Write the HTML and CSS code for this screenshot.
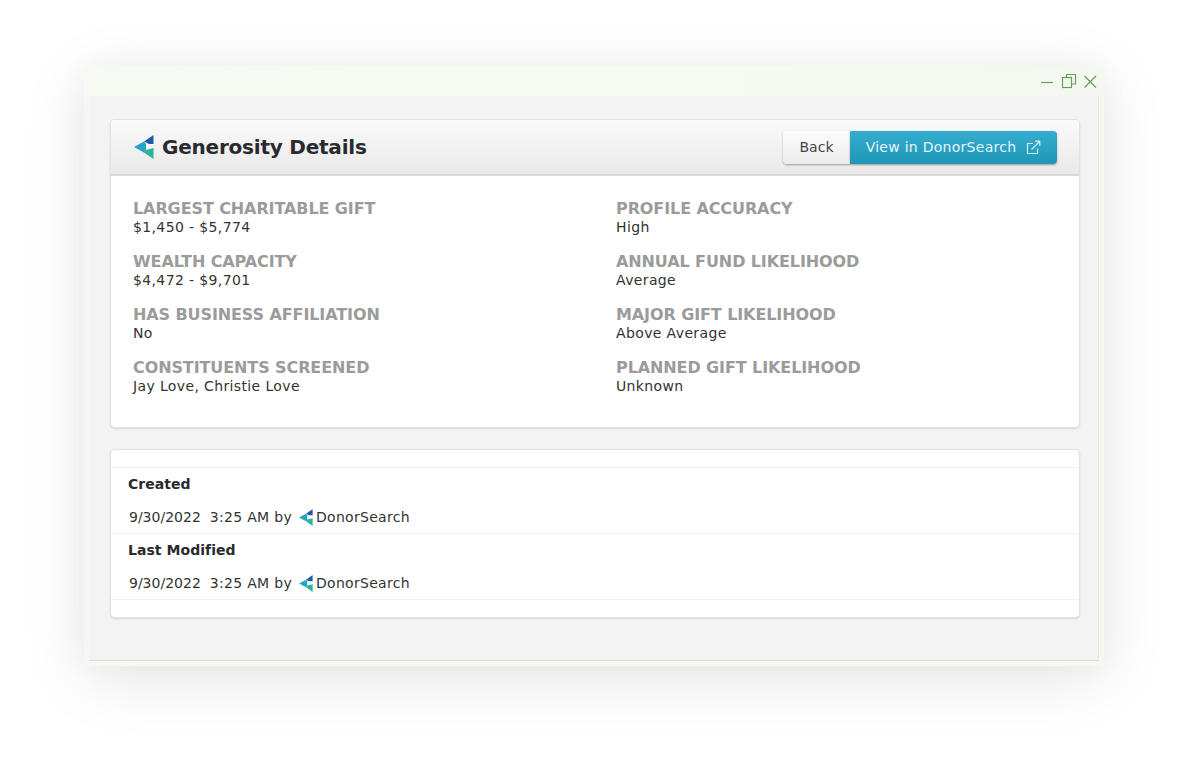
FILE: index.html
```html
<!DOCTYPE html>
<html lang="en">
<head>
<meta charset="utf-8">
<title>Generosity Details</title>
<link rel="stylesheet" href="styles.css">
</head>
<body>
<svg class="defs" width="0" height="0" aria-hidden="true">
  <symbol id="ds-logo" viewBox="0 0 20 24">
    <polygon points="19.5,0 19.5,9 15,9 10,6.5" fill="#1f5ca6"/>
    <polygon points="0,12 10,6.5 12,9 12,15 10,17.5" fill="#27a3c6"/>
    <polygon points="12,9 15,9 19.5,9 19.5,10 14,12 12,15" fill="#ffffff"/>
    <polygon points="10,17.5 12,15 19.5,13 19.5,24" fill="#27b49a"/>
  </symbol>
</svg>
<div class="window">
  <div class="titlebar">
    <svg class="winctl" width="60" height="16" viewBox="0 0 60 16" fill="none" stroke="#659e5b" stroke-width="1.2">
      <path d="M1 9.5H13"/>
      <rect x="22.5" y="4.5" width="9" height="10"/>
      <path d="M26.5 4.5V1.5H35.5V11H31.5"/>
      <path d="M44.5 3L56 14.5M56 3L44.5 14.5"/>
    </svg>
  </div>
  <div class="content">
    <section class="panel details">
      <header class="panel-head">
        <h1 class="title"><svg class="logo-lg"><use href="#ds-logo"/></svg>Generosity Details</h1>
        <div class="actions">
          <button class="btn btn-back">Back</button>
          <button class="btn btn-view">View in DonorSearch
            <svg class="ext" width="15" height="15" viewBox="0 0 15 15" fill="none" stroke="#d5eef5" stroke-width="1.2">
              <path d="M11.5 8.5V13.5H1.5V3.5H7"/>
              <path d="M5.5 9.5L13.5 1.5M9 1.2H13.8V6"/>
            </svg>
          </button>
        </div>
      </header>
      <div class="fields">
        <div class="field"><div class="label">LARGEST CHARITABLE GIFT</div><div class="value">$1,450 - $5,774</div></div>
        <div class="field"><div class="label">PROFILE ACCURACY</div><div class="value">High</div></div>
        <div class="field"><div class="label">WEALTH CAPACITY</div><div class="value">$4,472 - $9,701</div></div>
        <div class="field"><div class="label">ANNUAL FUND LIKELIHOOD</div><div class="value">Average</div></div>
        <div class="field"><div class="label">HAS BUSINESS AFFILIATION</div><div class="value">No</div></div>
        <div class="field"><div class="label">MAJOR GIFT LIKELIHOOD</div><div class="value">Above Average</div></div>
        <div class="field"><div class="label">CONSTITUENTS SCREENED</div><div class="value">Jay Love, Christie Love</div></div>
        <div class="field"><div class="label">PLANNED GIFT LIKELIHOOD</div><div class="value">Unknown</div></div>
      </div>
    </section>
    <section class="panel audit">
      <div class="audit-row">
        <div class="audit-label">Created</div>
        <div class="audit-value"><span class="date">9/30/2022</span><span>3:25 AM by</span><svg class="logo-sm"><use href="#ds-logo"/></svg><span>DonorSearch</span></div>
      </div>
      <div class="audit-row">
        <div class="audit-label">Last Modified</div>
        <div class="audit-value"><span class="date">9/30/2022</span><span>3:25 AM by</span><svg class="logo-sm"><use href="#ds-logo"/></svg><span>DonorSearch</span></div>
      </div>
    </section>
  </div>
</div>
</body>
</html>
```
FILE: styles.css
```css
* { box-sizing: border-box; }
html, body { margin: 0; height: 100%; }
body {
  background: #fff;
  padding: 66px 84px 0;
  font-family: "DejaVu Sans", Verdana, sans-serif;
  color: #333;
  overflow: hidden;
}
.defs { position: absolute; }
.window {
  width: 1020px;
  height: 600px;
  background: #f5f7f1;
  padding: 0 5px 5px;
  box-shadow: 0 12px 60px rgba(0,0,0,.10), 0 0 30px rgba(0,0,0,.03);
  display: flex;
  flex-direction: column;
}
.titlebar {
  height: 30px;
  margin: 0 -5px;
  padding: 7px 4px 0 0;
  display: flex;
  justify-content: flex-end;
  align-items: flex-start;
  background: linear-gradient(90deg, #f7f9f3, #f6fbf1 30%, #f5fbef 60%, #f4f7ef);
}
.content {
  flex: 1;
  background: #f2f3f2;
  border-right: 1px solid #e3e8e0;
  border-bottom: 1px solid #d9dcd7;
  padding: 24px 21px 0 22px;
}
.panel {
  width: 968px;
  background: #fff;
  border-radius: 4px;
  box-shadow: 0 0 0 1px #e1e2e2, 0 1px 2px 1px rgba(0,0,0,.12);
}
.details { height: 307px; }
.panel-head {
  height: 56px;
  padding: 0 22px 0 23px;
  display: flex;
  align-items: center;
  justify-content: space-between;
  background: linear-gradient(#fafafa, #e9e9e9);
  border-bottom: 2px solid #d8d8d8;
  border-radius: 4px 4px 0 0;
}
.title {
  margin: 0;
  display: flex;
  align-items: center;
  gap: 8px;
  font-size: 20px;
  font-weight: 700;
  letter-spacing: -.22px;
  color: #2a2a2e;
}
.logo-lg { width: 20px; height: 24px; }
.logo-sm { width: 14px; height: 17px; margin: 0 3px 0 7px; }
.actions { display: flex; }
.btn {
  height: 33px;
  border: 0;
  font: 14px "DejaVu Sans", Verdana, sans-serif;
  padding: 0;
  display: flex;
  align-items: center;
  justify-content: center;
  box-shadow: 0 1px 2px rgba(0,0,0,.35);
}
.btn-back {
  width: 67px;
  color: #444;
  background: linear-gradient(#fcfcfc, #ececec);
  border-radius: 4px 0 0 4px;
}
.btn-view {
  width: 207px;
  gap: 10px;
  color: #e4f5fa;
  letter-spacing: .27px;
  background: linear-gradient(#36add0, #1d97b6);
  border-radius: 0 4px 4px 0;
}
.fields {
  padding: 23px 20px 0 22px;
  display: grid;
  grid-template-columns: 483px 1fr;
  row-gap: 16px;
}
.field { height: 37px; }
.label {
  font-size: 16px;
  line-height: 19px;
  font-weight: 700;
  letter-spacing: -.1px;
  color: #9b9b9b;
}
.value {
  font-size: 14px;
  line-height: 18px;
  letter-spacing: .37px;
  color: #333;
}
.audit {
  margin-top: 23px;
  height: 167px;
  padding-top: 17px;
}
.audit-row {
  height: 66px;
  padding: 7px 17px 0;
  border-top: 1px solid #f0f0f0;
}
.audit-row:last-child { height: 67px; border-bottom: 1px solid #f0f0f0; }
.audit-label {
  font-size: 14px;
  line-height: 18px;
  font-weight: 700;
  letter-spacing: .05px;
  color: #2a2a2e;
}
.audit-value {
  margin-top: 15px;
  padding-left: 1px;
  display: flex;
  align-items: center;
  font-size: 14px;
  line-height: 18px;
  letter-spacing: .3px;
  color: #333;
}
.date { margin-right: 9px; letter-spacing: 0; }
```
